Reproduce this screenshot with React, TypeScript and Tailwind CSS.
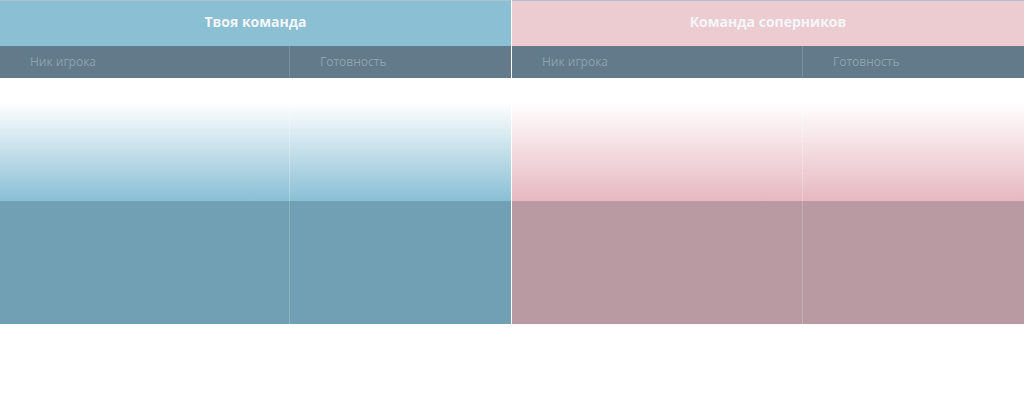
type Team = {
  title: string;
  head: string;
  fade: string;
  body: string;
  split: string;
};

const teams: Team[] = [
  {
    title: "Твоя команда",
    head: "bg-[#8bbfd4]",
    fade: "bg-[linear-gradient(to_bottom,#ffffff_0%,#ffffff_20%,#89bfd4_100%)]",
    body: "bg-[#719fb4]",
    split: "w-[511px]",
  },
  {
    title: "Команда соперников",
    head: "bg-[#ecccd1]",
    fade: "bg-[linear-gradient(to_bottom,#ffffff_0%,#ffffff_20%,#e6b8c0_100%)]",
    body: "bg-[#b99aa3]",
    split: "flex-1",
  },
];

function TeamPanel({ team, first }: { team: Team; first: boolean }) {
  return (
    <section className={`${team.split} flex flex-col ${first ? "" : "border-l border-white"}`}>
      <div
        className={`${team.head} flex h-[46px] items-center justify-center border-t border-[#a9c4d0] pb-1 text-sm font-bold text-[#f4f6f8]`}
      >
        {team.title}
      </div>
      <div className="flex h-8 items-center bg-[#627a8a] pb-px text-xs text-[#8ea2ae]">
        <div className="flex h-full flex-1 items-center pl-[30px]">Ник игрока</div>
        <div className="flex h-full w-[222px] items-center border-l border-[#76909f] pl-[30px]">
          Готовность
        </div>
      </div>
      <div className={`${team.fade} flex h-[123px]`}>
        <div className="flex-1" />
        <div className="w-[222px] border-l border-white/25" />
      </div>
      <div className={`${team.body} flex h-[123px]`}>
        <div className="flex-1" />
        <div className="w-[222px] border-l border-white/20" />
      </div>
    </section>
  );
}

export default function App() {
  return (
    <main className="h-[418px] w-[1024px] bg-white font-['Open_Sans',sans-serif]">
      <div className="flex">
        {teams.map((team, i) => (
          <TeamPanel key={team.title} team={team} first={i === 0} />
        ))}
      </div>
    </main>
  );
}
